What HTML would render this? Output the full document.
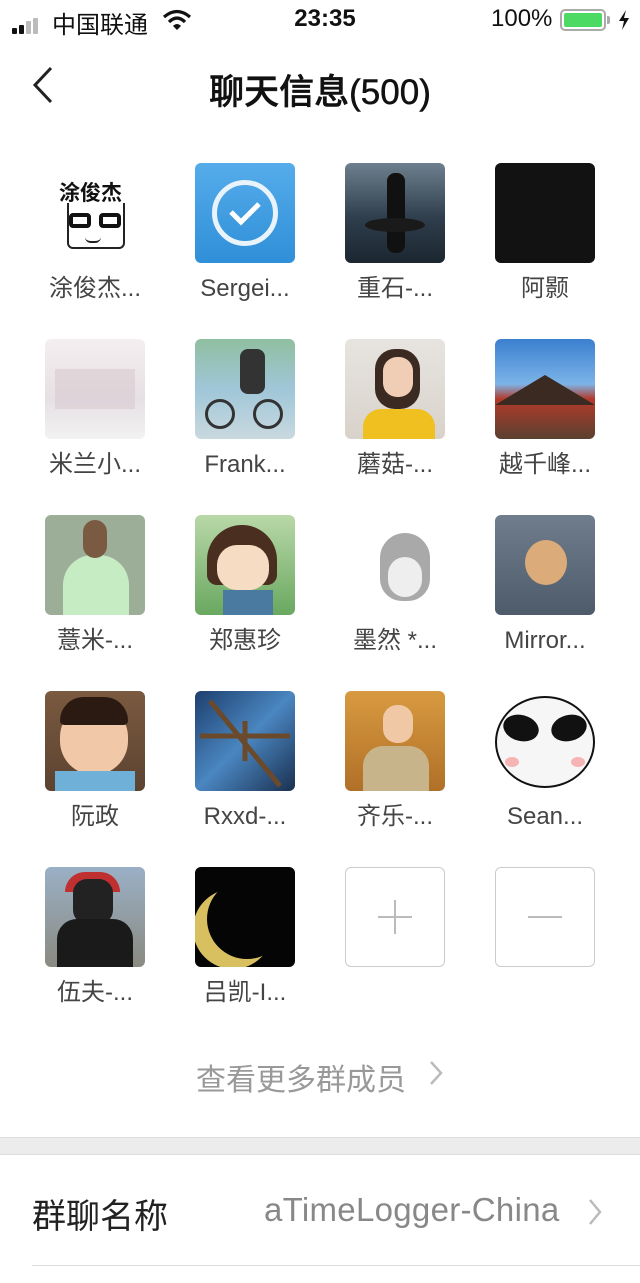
<!DOCTYPE html>
<html><head><meta charset="utf-8"><style>
*{margin:0;padding:0;box-sizing:border-box}
body{width:640px;height:1283px;background:#fff;font-family:"Liberation Sans","Noto Sans CJK SC",sans-serif;position:relative;overflow:hidden}
.abs{position:absolute}
.av{position:absolute;width:100px;height:100px;border-radius:6px;overflow:hidden}
.lb{position:absolute;width:150px;text-align:center;font-size:24px;color:#444;line-height:26px}
</style></head><body>
<div class="abs" style="left:12px;top:18px">
 <span class="abs" style="left:0;top:10px;width:5px;height:6px;background:#111;border-radius:1px"></span>
 <span class="abs" style="left:7px;top:7px;width:5px;height:9px;background:#111;border-radius:1px"></span>
 <span class="abs" style="left:14px;top:3px;width:5px;height:13px;background:#bbb;border-radius:1px"></span>
 <span class="abs" style="left:21px;top:0;width:5px;height:16px;background:#bbb;border-radius:1px"></span>
</div>
<div class="abs" style="left:52px;top:5px;font-size:24px;color:#111">中国联通</div>
<svg class="abs" style="left:162px;top:9px" width="30" height="22" viewBox="0 0 30 22"><path d="M2 8 Q15 -3 28 8" stroke="#111" stroke-width="3.2" fill="none"/><path d="M7 13 Q15 5 23 13" stroke="#111" stroke-width="3.2" fill="none"/><path d="M11 17 L15 21 L19 17 Q15 13 11 17Z" fill="#111"/></svg>
<div class="abs" style="left:0;width:650px;top:5px;text-align:center;font-size:24px;font-weight:bold;color:#111">23:35</div>
<div class="abs" style="left:491px;top:5px;font-size:24px;color:#111">100%</div>
<div class="abs" style="left:560px;top:9px;width:46px;height:22px;border:2px solid #aaa;border-radius:5px;padding:2px"><div style="width:100%;height:100%;background:#4cd964;border-radius:2px"></div></div>
<div class="abs" style="left:607px;top:16px;width:3px;height:8px;background:#aaa;border-radius:0 2px 2px 0"></div>
<svg class="abs" style="left:617px;top:10px" width="14" height="20" viewBox="0 0 14 20"><path d="M9 0 L2 11 H7 L5 20 L12 8 H7 Z" fill="#111"/></svg>
<svg class="abs" style="left:30px;top:66px" width="26" height="38" viewBox="0 0 26 38"><path d="M21 2 L5 19 L21 36" stroke="#222" stroke-width="3" fill="none"/></svg>
<div class="abs" style="left:0;width:640px;top:64px;text-align:center;font-size:35px;color:#111;font-weight:500;-webkit-text-stroke:0.5px #111">聊天信息(500)</div>

<!-- row 1 -->
<div class="av" style="left:45px;top:163px;background:#fff">
 <div class="abs" style="left:14px;top:14px;font-size:21px;font-weight:bold;color:#111">涂俊杰</div>
 <div class="abs" style="left:22px;top:40px;width:58px;height:46px;border:2px solid #222;border-top:none;border-radius:0 0 6px 6px"></div>
 <div class="abs" style="left:24px;top:50px;width:22px;height:15px;border:4px solid #111;border-radius:4px"></div>
 <div class="abs" style="left:54px;top:50px;width:22px;height:15px;border:4px solid #111;border-radius:4px"></div>
 <div class="abs" style="left:40px;top:74px;width:16px;height:6px;border-bottom:2px solid #222;border-radius:0 0 8px 8px"></div>
</div>
<div class="av" style="left:195px;top:163px;background:linear-gradient(#55acea,#2f8fd8)">
 <div class="abs" style="left:17px;top:17px;width:66px;height:66px;border:5px solid #e8f3fc;border-radius:50%"></div>
 <svg class="abs" style="left:30px;top:35px" width="40" height="30"><path d="M6 14 L16 24 L34 6" stroke="#fff" stroke-width="5" fill="none"/></svg>
</div>
<div class="av" style="left:345px;top:163px;background:linear-gradient(#6d7f8e,#2f3e4c 55%,#1b2630)"><div class="abs" style="left:42px;top:10px;width:18px;height:80px;background:#111;border-radius:8px"></div><div class="abs" style="left:20px;top:55px;width:60px;height:14px;background:#1a1a1a;border-radius:50%"></div></div>
<div class="av" style="left:495px;top:163px;background:#121212"></div>
<div class="lb" style="left:20px;top:276px">涂俊杰...</div>
<div class="lb" style="left:170px;top:276px">Sergei...</div>
<div class="lb" style="left:320px;top:276px">重石-...</div>
<div class="lb" style="left:470px;top:276px">阿颢</div>

<!-- row 2 -->
<div class="av" style="left:45px;top:339px;background:linear-gradient(#f4eef0,#e6e0e4 60%,#f2f2f2)"><div class="abs" style="left:10px;top:30px;width:80px;height:40px;background:#d9c9cf;opacity:.6"></div></div>
<div class="av" style="left:195px;top:339px;background:linear-gradient(#8fbfa0,#9fc6d8 50%,#c9d9df)"><div class="abs" style="left:45px;top:10px;width:25px;height:45px;background:#333;border-radius:8px"></div><div class="abs" style="left:10px;top:60px;width:30px;height:30px;border:3px solid #333;border-radius:50%"></div><div class="abs" style="left:58px;top:60px;width:30px;height:30px;border:3px solid #333;border-radius:50%"></div></div>
<div class="av" style="left:345px;top:339px;background:linear-gradient(#e7e4e0,#d8d2ca)"><div class="abs" style="left:30px;top:10px;width:45px;height:60px;background:#3a2a22;border-radius:20px"></div><div class="abs" style="left:38px;top:18px;width:30px;height:40px;background:#f0cdb5;border-radius:14px"></div><div class="abs" style="left:18px;top:70px;width:72px;height:30px;background:#f0c020;border-radius:18px 18px 0 0"></div></div>
<div class="av" style="left:495px;top:339px;background:linear-gradient(#3b7fd0,#7cb4e8 45%,#b33a2a 60%,#5a4030)"><div class="abs" style="left:0;top:36px;width:100px;height:30px;background:#3a2a22;clip-path:polygon(50% 0,100% 100%,0 100%)"></div></div>
<div class="lb" style="left:20px;top:452px">米兰小...</div>
<div class="lb" style="left:170px;top:452px">Frank...</div>
<div class="lb" style="left:320px;top:452px">蘑菇-...</div>
<div class="lb" style="left:470px;top:452px">越千峰...</div>

<!-- row 3 -->
<div class="av" style="left:45px;top:515px;background:#9dae98"><div class="abs" style="left:18px;top:40px;width:66px;height:62px;background:#c5ecc3;border-radius:30px 30px 0 0"></div><div class="abs" style="left:38px;top:5px;width:24px;height:38px;background:#7a5a40;border-radius:12px"></div></div>
<div class="av" style="left:195px;top:515px;background:linear-gradient(#b9d8a8,#6aa860)"><div class="abs" style="left:12px;top:10px;width:70px;height:60px;background:#4a2e20;border-radius:35px 35px 10px 10px"></div><div class="abs" style="left:22px;top:30px;width:52px;height:45px;background:#f7dcc4;border-radius:20px"></div><div class="abs" style="left:28px;top:75px;width:50px;height:25px;background:#4a7aa0"></div></div>
<div class="av" style="left:345px;top:515px;background:#fff"><div class="abs" style="left:35px;top:18px;width:50px;height:68px;background:#a9a9a9;border-radius:25px 25px 22px 22px"></div><div class="abs" style="left:43px;top:42px;width:34px;height:40px;background:#eee;border-radius:17px"></div></div>
<div class="av" style="left:495px;top:515px;background:linear-gradient(#6f7d8d,#4d5b6a)"><div class="abs" style="left:30px;top:25px;width:42px;height:45px;background:#dcab7a;border-radius:50%"></div></div>
<div class="lb" style="left:20px;top:628px">薏米-...</div>
<div class="lb" style="left:170px;top:628px">郑惠珍</div>
<div class="lb" style="left:320px;top:628px">墨然 *...</div>
<div class="lb" style="left:470px;top:628px">Mirror...</div>

<!-- row 4 -->
<div class="av" style="left:45px;top:691px;background:linear-gradient(#7a5a40,#5c4330)"><div class="abs" style="left:15px;top:12px;width:68px;height:72px;background:#f1c9a8;border-radius:34px"></div><div class="abs" style="left:15px;top:6px;width:68px;height:28px;background:#2a1a12;border-radius:34px 34px 6px 6px"></div><div class="abs" style="left:10px;top:80px;width:80px;height:20px;background:#6fb0d8"></div></div>
<div class="av" style="left:195px;top:691px;background:linear-gradient(135deg,#1d3f6e,#4a86c0 50%,#1a3050)"><svg class="abs" width="100" height="100"><path d="M15 10 L85 95 M5 45 L95 45 M50 30 L50 70" stroke="#6a4a2a" stroke-width="5"/></svg></div>
<div class="av" style="left:345px;top:691px;background:linear-gradient(#d89a40,#b07028)"><div class="abs" style="left:38px;top:14px;width:30px;height:38px;background:#f0c8a6;border-radius:14px"></div><div class="abs" style="left:18px;top:55px;width:66px;height:45px;background:#c8b48a;border-radius:20px 20px 0 0"></div></div>
<div class="av" style="left:495px;top:691px;background:#fff"><div class="abs" style="left:0;top:5px;width:100px;height:92px;border-radius:50%;background:#f6f6f6;border:2px solid #111"></div><div class="abs" style="left:8px;top:24px;width:36px;height:26px;background:#111;border-radius:50%;transform:rotate(15deg)"></div><div class="abs" style="left:56px;top:24px;width:36px;height:26px;background:#111;border-radius:50%;transform:rotate(-15deg)"></div><div class="abs" style="left:10px;top:66px;width:14px;height:10px;background:#f5b5b5;border-radius:50%"></div><div class="abs" style="left:76px;top:66px;width:14px;height:10px;background:#f5b5b5;border-radius:50%"></div></div>
<div class="lb" style="left:20px;top:804px">阮政</div>
<div class="lb" style="left:170px;top:804px">Rxxd-...</div>
<div class="lb" style="left:320px;top:804px">齐乐-...</div>
<div class="lb" style="left:470px;top:804px">Sean...</div>

<!-- row 5 -->
<div class="av" style="left:45px;top:867px;background:linear-gradient(#9ab0c6,#8a8a80)"><div class="abs" style="left:20px;top:5px;width:55px;height:20px;background:#c03030;border-radius:20px 20px 0 0"></div><div class="abs" style="left:28px;top:12px;width:40px;height:45px;background:#222;border-radius:14px"></div><div class="abs" style="left:12px;top:52px;width:76px;height:48px;background:#1a1a1a;border-radius:20px 20px 0 0"></div></div>
<div class="av" style="left:195px;top:867px;background:#050505"><div class="abs" style="left:12px;top:12px;width:80px;height:80px;border-radius:50%;box-shadow:-14px 10px 0 0 #d8c060"></div></div>
<div class="av" style="left:345px;top:867px;border:1px solid #ccc;background:#fff"><div class="abs" style="left:32px;top:48px;width:34px;height:2px;background:#bbb"></div><div class="abs" style="left:48px;top:32px;width:2px;height:34px;background:#bbb"></div></div>
<div class="av" style="left:495px;top:867px;border:1px solid #ccc;background:#fff"><div class="abs" style="left:32px;top:48px;width:34px;height:2px;background:#bbb"></div></div>
<div class="lb" style="left:20px;top:980px">伍夫-...</div>
<div class="lb" style="left:170px;top:980px">吕凯-I...</div>

<div class="abs" style="left:196px;top:1055px;font-size:30px;color:#999;white-space:nowrap">查看更多群成员</div>
<svg class="abs" style="left:428px;top:1060px" width="16" height="26"><path d="M3 2 L13 13 L3 24" stroke="#bbb" stroke-width="2.5" fill="none"/></svg>

<div class="abs" style="left:0;top:1137px;width:640px;height:18px;background:#ececec;border-top:1px solid #ddd;border-bottom:1px solid #ddd"></div>
<div class="abs" style="left:32px;top:1189px;font-size:34px;color:#222">群聊名称</div>
<div class="abs" style="left:264px;top:1191px;font-size:33px;color:#888;white-space:nowrap;letter-spacing:0.3px">aTimeLogger-China</div>
<svg class="abs" style="left:587px;top:1198px" width="16" height="28"><path d="M3 2 L13 14 L3 26" stroke="#bbb" stroke-width="2.5" fill="none"/></svg>
<div class="abs" style="left:32px;top:1265px;width:608px;height:1px;background:#ddd"></div>
</body></html>
